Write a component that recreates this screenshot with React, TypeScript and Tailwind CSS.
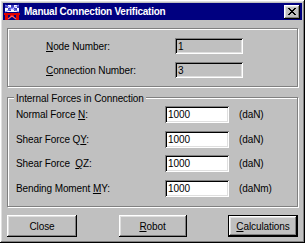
import React from "react";

const raised =
  "shadow-[inset_-1px_-1px_0_#000,inset_1px_1px_0_#fff,inset_-2px_-2px_0_#808080,inset_2px_2px_0_#dfdfdf]";
const sunken =
  "shadow-[inset_1px_1px_0_#808080,inset_-1px_-1px_0_#fff,inset_2px_2px_0_#000,inset_-2px_-2px_0_#dfdfdf]";
const etched = "border border-[#808080] shadow-[inset_1px_1px_0_#fff,1px_1px_0_#fff]";

function U({ children }: { children: React.ReactNode }) {
  return <span className="underline underline-offset-[1px]">{children}</span>;
}

function AppIcon() {
  return (
    <svg width="16" height="16" viewBox="0 0 16 16">
      <path d="M1 1h14v7H1z" fill="#ffffff" />
      <path d="M1 1h3v3H1zM7 1h3v3H7zM4 4h3v3H4zM10 4h3v3h-3zM13 1h2v3h-2z" fill="#4040c0" />
      <path d="M1 1l14 7M15 1L1 8" stroke="#8080ff" strokeWidth="1" />
      <path d="M0 9h16v2H0zM1 11h3v5H1zM12 11h3v5h-3zM6 11h4v2H6z" fill="#e00000" />
      <path d="M4 15l4-3 4 3" stroke="#ff6060" strokeWidth="1.2" fill="none" />
    </svg>
  );
}

function Field({ value, white }: { value: string; white?: boolean }) {
  return (
    <div
      className={`h-full flex items-center pl-[3px] ${sunken} ${white ? "bg-white" : "bg-[#c0c0c0]"}`}
    >
      {value}
    </div>
  );
}

function ForceRow({ label, unit }: { label: React.ReactNode; unit: string }) {
  return (
    <div className="flex items-center h-[17px]">
      <div className="w-[157px] pl-[8px]">{label}</div>
      <div className="w-[64px] h-full">
        <Field value="1000" white />
      </div>
      <div className="pl-[10px]">{unit}</div>
    </div>
  );
}

function Button({ children, w, def }: { children: React.ReactNode; w: string; def?: boolean }) {
  return (
    <div className={`${w} h-[22px] ${def ? "border border-black" : ""}`}>
      <div className={`h-full flex items-center justify-center ${raised}`}>{children}</div>
    </div>
  );
}

export default function App() {
  return (
    <div
      className={`w-[305px] h-[243px] bg-[#c0c0c0] p-[3px] flex flex-col text-[10px] tracking-[-0.1px] text-black [font-family:'Liberation_Sans',Arial,sans-serif] ${raised}`}
    >
      <div className="h-[17px] bg-[#000080] flex items-center pl-[1px] pr-[2px]">
        <AppIcon />
        <span className="ml-[4px] text-white font-bold text-[10px] tracking-[-0.25px]">
          Manual Connection Verification
        </span>
        <div className={`ml-auto w-[16px] h-[14px] bg-[#c0c0c0] flex items-center justify-center ${raised}`}>
          <svg width="8" height="7" viewBox="0 0 8 7">
            <path d="M0 0l7 7M1 0l7 7M7 0L0 7M8 0L1 7" stroke="#000" strokeWidth="1" />
          </svg>
        </div>
      </div>

      <div className={`mt-[8px] mx-[4px] h-[59px] pt-[9px] flex flex-col gap-[8px] ${etched}`}>
        <div className="flex items-center h-[16px]">
          <div className="w-[167px] pl-[38px]">
            <U>N</U>ode Number:
          </div>
          <div className="w-[68px] h-full">
            <Field value="1" />
          </div>
        </div>
        <div className="flex items-center h-[16px]">
          <div className="w-[167px] pl-[38px]">
            <U>C</U>onnection Number:
          </div>
          <div className="w-[68px] h-full">
            <Field value="3" />
          </div>
        </div>
      </div>

      <div className={`relative mt-[10px] mx-[4px] h-[110px] pt-[8px] flex flex-col gap-[7.5px] ${etched}`}>
        <span className="absolute left-[6px] top-[-7px] px-[2px] bg-[#c0c0c0]">
          Internal Forces in Connection
        </span>
        <ForceRow label={<>Normal Force <U>N</U>:</>} unit="(daN)" />
        <ForceRow label={<>Shear Force Q<U>Y</U>:</>} unit="(daN)" />
        <ForceRow label={<>Shear Force&nbsp;&nbsp;<U>Q</U>Z:</>} unit="(daN)" />
        <ForceRow label={<>Bending Moment <U>M</U>Y:</>} unit="(daNm)" />
      </div>

      <div className="mt-[8px] mx-[4px] flex justify-between">
        <Button w="w-[70px]">Close</Button>
        <Button w="w-[68px]">
          <span>
            <U>R</U>obot
          </span>
        </Button>
        <Button w="w-[70px]" def>
          <span>
            <U>C</U>alculations
          </span>
        </Button>
      </div>
    </div>
  );
}
